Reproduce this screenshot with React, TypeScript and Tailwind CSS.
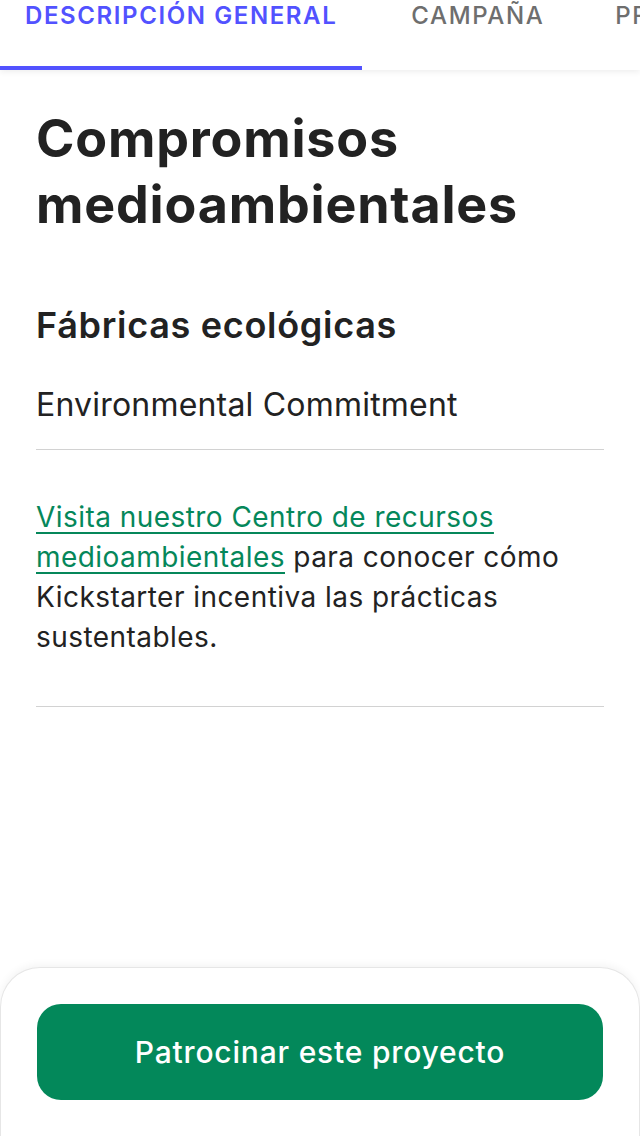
import React from "react";

export default function App() {
  return (
    <div
      className="w-[640px] h-[1136px] bg-white flex flex-col overflow-hidden text-[#222222]"
      style={{ fontFamily: "Inter, 'Noto Sans', sans-serif" }}
    >
      {/* Tab bar */}
      <div className="h-[70px] flex shrink-0 shadow-[0_2px_6px_rgba(0,0,0,0.07)] relative z-10 bg-white whitespace-nowrap overflow-hidden">
        <div className="h-full shrink-0 px-[25px] pt-[4px] border-b-4 border-[#5252ff] text-[#5252ff] text-[24px] leading-[24px] font-semibold tracking-[1.6px]">
          DESCRIPCIÓN GENERAL
        </div>
        <div className="h-full shrink-0 px-[25px] ml-[24px] pt-[4px] text-[#6e6e6e] text-[24px] leading-[24px] font-medium tracking-[1.6px]">
          CAMPAÑA
        </div>
        <div className="h-full shrink-0 px-[25px] ml-[21px] pt-[4px] text-[#6e6e6e] text-[24px] leading-[24px] font-medium tracking-[1.6px]">
          PREGUNTAS FRECUENTES
        </div>
      </div>

      {/* Content */}
      <div className="px-9 pt-[36px] flex flex-col">
        <h1 className="text-[52px] leading-[66px] font-bold tracking-[0.8px]">
          Compromisos medioambientales
        </h1>
        <h2 className="mt-[65px] text-[36px] leading-[44px] font-semibold tracking-[0.7px]">
          Fábricas ecológicas
        </h2>
        <p className="mt-[38px] text-[32px] leading-[40px] font-normal tracking-[0.2px]">
          Environmental Commitment
        </p>
        <div className="mt-[24px] h-px bg-[#d2d2d2]" />
        <p className="mt-[47px] text-[28px] leading-[40px] tracking-[0.45px]">
          <span className="text-[#05875a] underline decoration-2 underline-offset-[5px]">
            Visita nuestro Centro de recursos medioambientales
          </span>{" "}
          para conocer cómo Kickstarter incentiva las prácticas sustentables.
        </p>
        <div className="mt-[49px] h-px bg-[#d2d2d2]" />
      </div>

      {/* Bottom sheet */}
      <div className="mt-auto h-[169px] shrink-0 rounded-t-[40px] border border-b-0 border-[#e6e6e6] shadow-[0_-2px_8px_rgba(0,0,0,0.05)] bg-white px-9 pt-[36px]">
        <button className="w-full h-[96px] rounded-[24px] bg-[#03885a] text-white text-[30px] font-medium tracking-[0.8px] flex items-center justify-center">
          Patrocinar este proyecto
        </button>
      </div>
    </div>
  );
}
